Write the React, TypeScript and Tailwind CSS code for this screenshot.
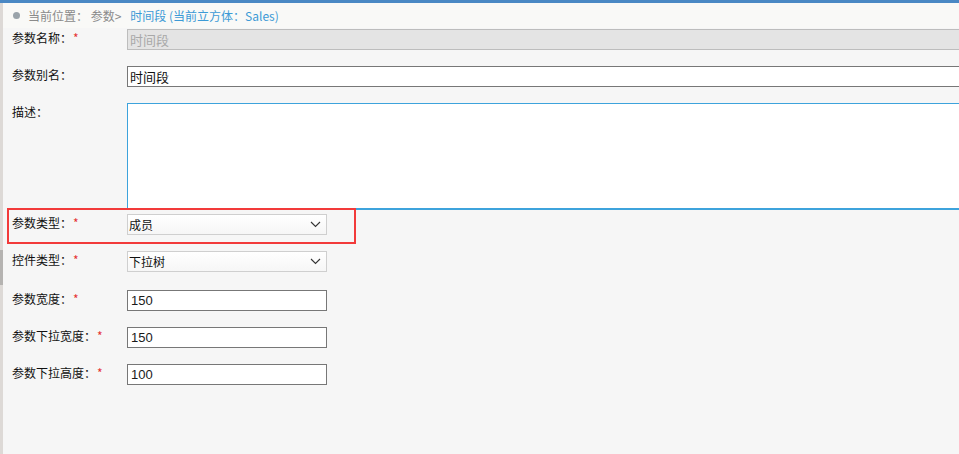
import React from "react";

const font = { fontFamily: '"Noto Sans CJK SC", "Liberation Sans", sans-serif' };

function Label({ text, req }: { text: string; req?: boolean }) {
  return (
    <div className="w-[124px] shrink-0 pl-[9px] pt-[1px] text-[12px] leading-[16px] text-[#111]">
      {text}
      {req && <span className="text-[#e53333] ml-[1px]">*</span>}
    </div>
  );
}

function Chevron() {
  return (
    <svg width="11" height="7" viewBox="0 0 11 7" className="shrink-0">
      <polyline points="1,1 5.5,5.5 10,1" fill="none" stroke="#333" strokeWidth="1.1" />
    </svg>
  );
}

function Select({ value }: { value: string }) {
  return (
    <div className="w-[200px] h-[21px] border border-[#cfcfcf] bg-gradient-to-b from-white to-[#f6f6f6] flex items-center justify-between pl-[1px] pr-[5px] text-[12px] text-[#111]">
      <span>{value}</span>
      <Chevron />
    </div>
  );
}

function SmallInput({ value }: { value: string }) {
  return (
    <div
      className="w-[200px] h-[21px] border border-[#777] bg-white flex items-center pl-[3px] text-[13px] text-[#1a1a1a]"
      style={{ fontFamily: '"Liberation Sans", sans-serif' }}
    >
      {value}
    </div>
  );
}

export default function App() {
  return (
    <div className="w-[959px] h-[454px] overflow-hidden bg-[#f6f6f6] flex flex-col" style={font}>
      <div className="h-[3px] bg-[#4a88c4] shrink-0" />
      <div className="flex flex-1 relative">
        <div className="w-[3px] bg-[#ddd9d6] shrink-0 flex flex-col">
          <div className="h-[247px]" />
          <div className="h-[35px] bg-[#b5b3b1]" />
        </div>
        <div className="flex-1 flex flex-col min-w-0">
          <div className="h-[25px] bg-[#f9f9f7] flex items-center pl-[10px] text-[12px] whitespace-nowrap">
            <span className="w-[7px] h-[7px] rounded-full bg-[#9aa3aa] mr-[8px]" />
            <span className="text-[#8a8a8a]">当前位置：&nbsp;参数&gt;</span>
            <span className="text-[#3c9ad6] ml-[9px]">时间段 (当前立方体：Sales)</span>
          </div>

          <div className="flex items-start mt-[1px]">
            <Label text="参数名称：" req />
            <div className="flex-1 h-[21px] border border-[#bdbdbd] border-r-0 bg-[#e4e4e4] flex items-center pl-[2px] text-[13px] text-[#a8a8a8]">
              时间段
            </div>
          </div>

          <div className="flex items-start mt-[16px]">
            <Label text="参数别名：" />
            <div className="flex-1 h-[21px] border border-[#777] border-r-0 bg-white flex items-center pl-[2px] text-[13px] text-[#111]">
              时间段
            </div>
          </div>

          <div className="flex items-start mt-[16px]">
            <Label text="描述：" />
            <div className="flex-1 h-[107px] border border-[#3da3dc] border-r-0 border-b-2 bg-white" />
          </div>

          <div className="flex items-start mt-[4px]">
            <Label text="参数类型：" req />
            <Select value="成员" />
          </div>

          <div className="flex items-start mt-[16px]">
            <Label text="控件类型：" req />
            <Select value="下拉树" />
          </div>

          <div className="flex items-start mt-[18px]">
            <Label text="参数宽度：" req />
            <SmallInput value="150" />
          </div>

          <div className="flex items-start mt-[16px]">
            <Label text="参数下拉宽度：" req />
            <SmallInput value="150" />
          </div>

          <div className="flex items-start mt-[16px]">
            <Label text="参数下拉高度：" req />
            <SmallInput value="100" />
          </div>
        </div>

        <div className="absolute left-[7px] top-[205px] w-[349px] h-[36px] border-2 border-[#f23a3a] pointer-events-none" />
      </div>
    </div>
  );
}
